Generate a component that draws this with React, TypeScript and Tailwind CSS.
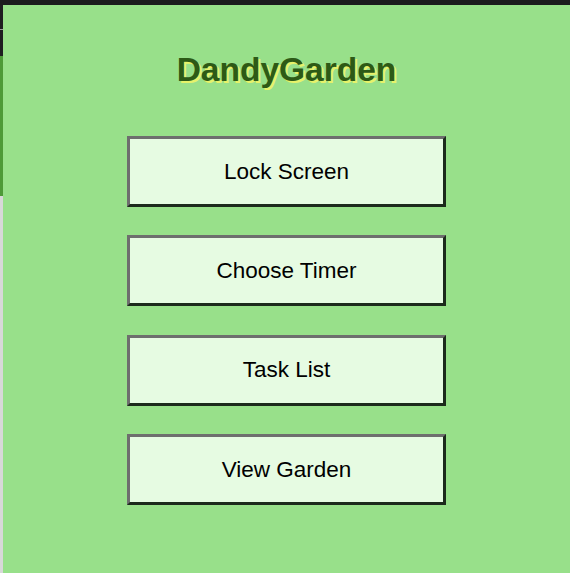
import React from "react";

const items = ["Lock Screen", "Choose Timer", "Task List", "View Garden"];

export default function App() {
  return (
    <div
      className="w-[570px] h-[573px] flex flex-col overflow-hidden bg-[#98e08a]"
      style={{ fontFamily: '"Liberation Sans", Arial, sans-serif' }}
    >
      <div className="h-[5px] bg-[#1c1c1e] shrink-0" />
      <div className="flex flex-1">
        <div className="w-[3px] flex flex-col shrink-0">
          <div className="h-[24px] bg-[#1e1e20]" />
          <div className="h-[1px] bg-[#9a9a9a]" />
          <div className="h-[26px] bg-[#1e1e20]" />
          <div className="h-[140px] bg-[#4e9a38]" />
          <div className="flex-1 bg-[#d8d8d8]" />
        </div>
        <div className="flex-1 flex flex-col items-center">
          <h1 className="mt-[46px] text-[33.5px] font-bold leading-[38px] text-[#2d5a16] [text-shadow:2px_2px_0_#e6f26a]">
            DandyGarden
          </h1>
          <div className="mt-[47px] flex flex-col gap-[28.33px]">
            {items.map((t) => (
              <button
                key={t}
                className="w-[319px] h-[71px] bg-[#e6fbe2] border-[3px] border-t-[#6e6e6e] border-l-[#6e6e6e] border-b-[#1c2a1c] border-r-[#1c2a1c] text-[22.5px] text-black flex items-center justify-center"
              >
                {t}
              </button>
            ))}
          </div>
        </div>
      </div>
    </div>
  );
}
